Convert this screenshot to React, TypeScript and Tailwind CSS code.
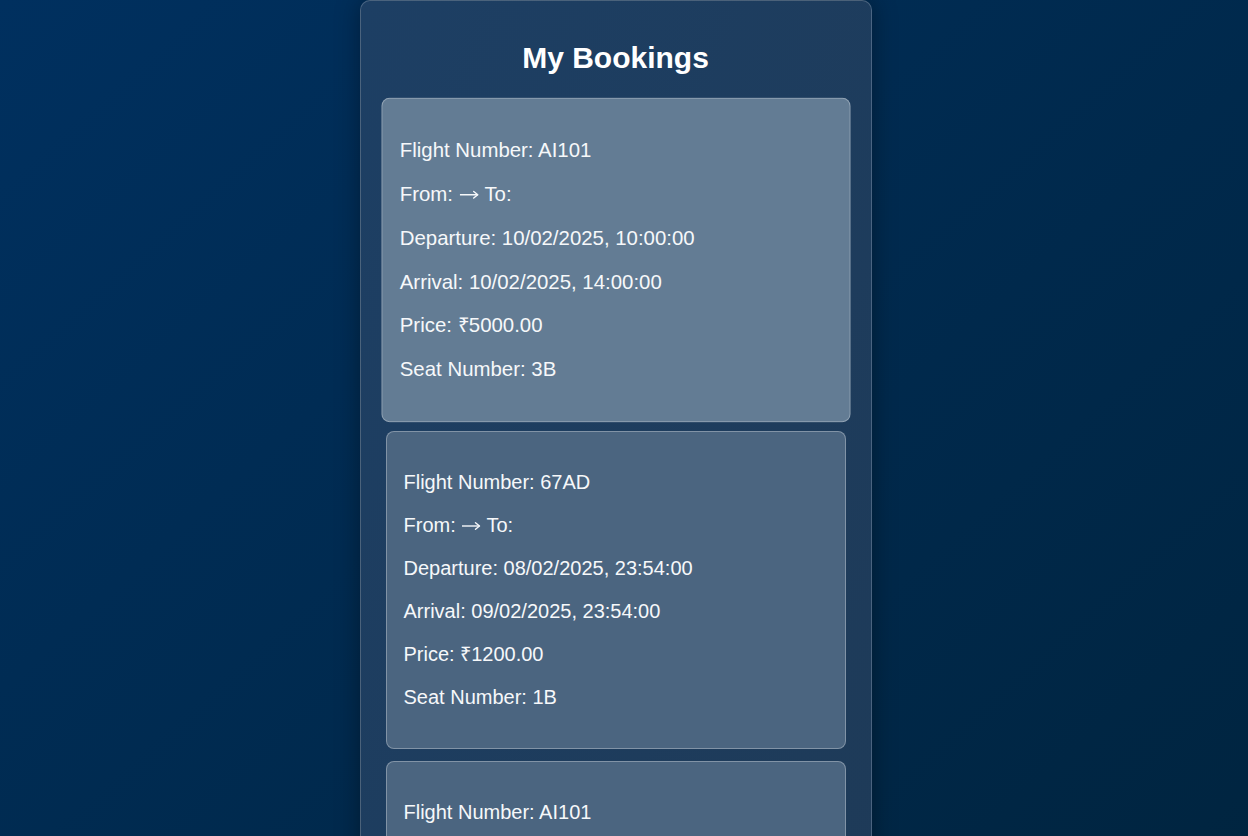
const bookings = [
  {
    flight: 'AI101',
    departure: '10/02/2025, 10:00:00',
    arrival: '10/02/2025, 14:00:00',
    price: '₹5000.00',
    seat: '3B',
  },
  {
    flight: '67AD',
    departure: '08/02/2025, 23:54:00',
    arrival: '09/02/2025, 23:54:00',
    price: '₹1200.00',
    seat: '1B',
  },
  {
    flight: 'AI101',
    departure: '10/02/2025, 10:00:00',
    arrival: '10/02/2025, 14:00:00',
    price: '₹5000.00',
    seat: '4A',
  },
];

function Arrow() {
  return (
    <svg className="inline-block align-[-3px]" width="20" height="20" viewBox="0 0 20 20" fill="none">
      <path d="M1 11h17.5" stroke="currentColor" strokeWidth="1.4" />
      <path d="M14.5 7.8l4 3.2-4 3.2" stroke="currentColor" strokeWidth="1.4" strokeLinecap="round" strokeLinejoin="round" />
    </svg>
  );
}

export default function App() {
  return (
    <div
      className="min-h-screen flex justify-center pr-[17px] bg-gradient-to-br from-[#00305f] to-[#00233c] text-white"
      style={{ fontFamily: '"Liberation Sans", Arial, sans-serif' }}
    >
      <div className="w-[512px] self-start rounded-[10px] border border-white/20 bg-gradient-to-br from-[#1d3f64] to-[#1e3a57] px-[25px] pt-[40px] pb-[25px] shadow-[0_0_24px_rgba(0,0,0,0.35)]">
        <h2 className="text-center text-[30px] leading-[34px] font-bold mb-[26px]">My Bookings</h2>

        {bookings.map((b, i) => (
          <div
            key={i}
            className={
              i === 0
                ? 'mb-[12px] scale-[1.02] rounded-lg border border-white/30 bg-[#637c94] px-[17px] py-[19px]'
                : 'mb-[12px] rounded-lg border border-white/30 bg-[#4b6580] px-[17px] py-[19px]'
            }
          >
            <p className="my-5 text-[20px] leading-[23px] text-[#f6f8fa]">Flight Number: {b.flight}</p>
            <p className="my-5 text-[20px] leading-[23px] text-[#f6f8fa]">
              From: <Arrow /> To:
            </p>
            <p className="my-5 text-[20px] leading-[23px] text-[#f6f8fa]">Departure: {b.departure}</p>
            <p className="my-5 text-[20px] leading-[23px] text-[#f6f8fa]">Arrival: {b.arrival}</p>
            <p className="my-5 text-[20px] leading-[23px] text-[#f6f8fa]">Price: {b.price}</p>
            <p className="my-5 text-[20px] leading-[23px] text-[#f6f8fa]">Seat Number: {b.seat}</p>
          </div>
        ))}
      </div>
    </div>
  );
}
